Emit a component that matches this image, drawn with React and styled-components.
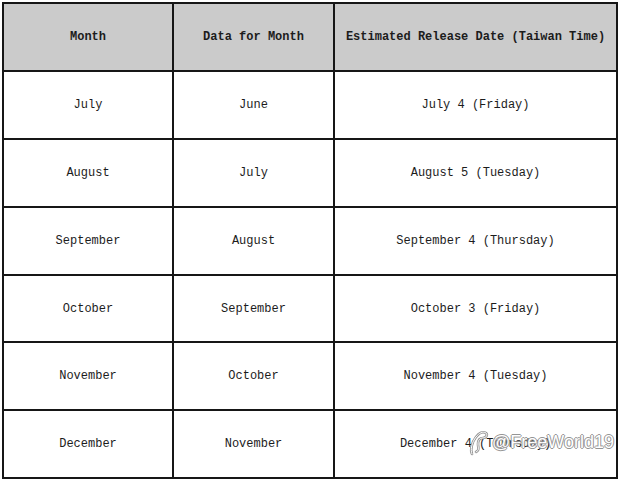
import styled, { createGlobalStyle } from "styled-components";

const GlobalStyle = createGlobalStyle`
  html, body {
    margin: 0;
    padding: 0;
    background: #ffffff;
  }
  body {
    font-family: "Liberation Mono", "Noto Sans CJK SC", monospace;
  }
`;

const Page = styled.div`
  position: relative;
  width: 620px;
  height: 482px;
  padding: 2px 0 0 2px;
  box-sizing: border-box;
`;

const Grid = styled.div`
  display: grid;
  grid-template-columns: 168px 159px 281px;
  grid-auto-rows: 65.9px;
  gap: 2px;
  padding: 2px;
  width: fit-content;
  background: #161616;
`;

const Cell = styled.div`
  display: flex;
  align-items: center;
  justify-content: center;
  background: ${(p) => (p.$head ? "#cbcbcb" : "#ffffff")};
  color: #1c1c1c;
  font-size: 12px;
  font-weight: ${(p) => (p.$head ? 700 : 400)};
  white-space: pre;
`;

const Watermark = styled.div`
  position: absolute;
  left: 466px;
  top: 428px;
  display: flex;
  align-items: center;
  gap: 2px;
  color: #ffffff;
  font-family: "Liberation Sans", "Noto Sans CJK SC", sans-serif;
  font-size: 18px;
  text-shadow: -1px 0 #8a8a8a, 1px 0 #8a8a8a, 0 -1px #8a8a8a, 0 1px #8a8a8a;
  opacity: 0.9;
`;

const rows = [
  ["July", "June", "July 4 (Friday)"],
  ["August", "July", "August 5 (Tuesday)"],
  ["September", "August", "September 4 (Thursday)"],
  ["October", "September", "October 3 (Friday)"],
  ["November", "October", "November 4 (Tuesday)"],
  ["December", "November", "December 4 (Thursday)"],
];

// curly zhihu watermark glyph
const markPath =
  "M6 26 C4 22 6 14 10 9 C13 5 17 3 20 5 C22 7 20 10 17 10 C14 10 12 12 12 16 C12 20 14 22 10 24";

function ZhihuMark() {
  return (
    <svg width="24" height="28" viewBox="0 0 24 28">
      <path d={markPath} fill="none" stroke="#8a8a8a" strokeWidth="2.6" strokeLinecap="round" />
      <path d={markPath} fill="none" stroke="#ffffff" strokeWidth="1" strokeLinecap="round" />
    </svg>
  );
}

export default function App() {
  return (
    <Page>
      <GlobalStyle />
      <Grid>
        <Cell $head>Month</Cell>
        <Cell $head>Data for Month</Cell>
        <Cell $head>Estimated Release Date (Taiwan Time)</Cell>
        {rows.map((row, i) =>
          row.map((text, j) => <Cell key={`${i}-${j}`}>{text}</Cell>)
        )}
      </Grid>
      <Watermark>
        <ZhihuMark />
        <span>@FreeWorld19</span>
      </Watermark>
    </Page>
  );
}
